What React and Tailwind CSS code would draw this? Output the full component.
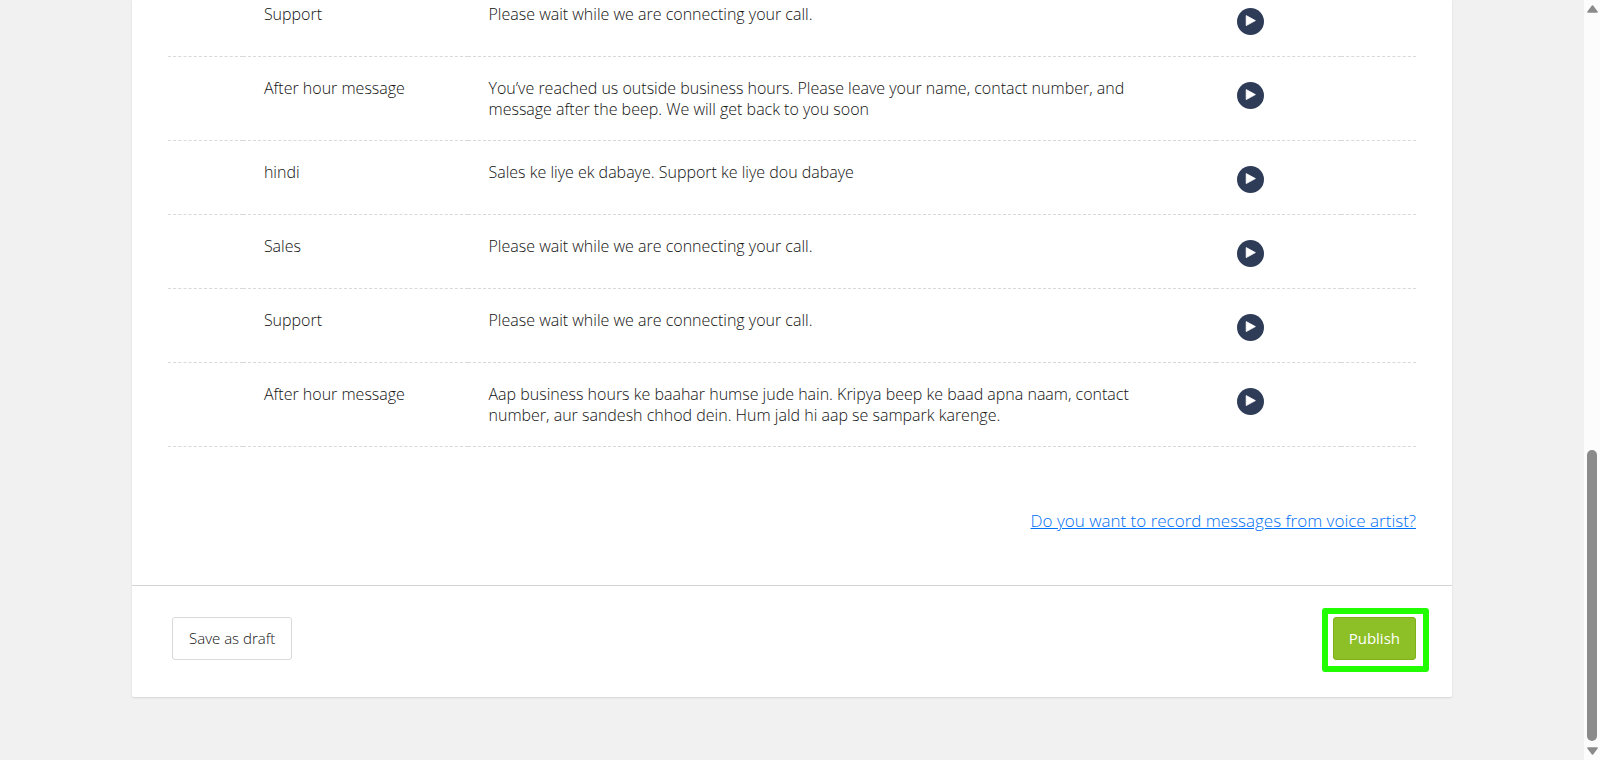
import { useState } from 'react'

// ── Data ────────────────────────────────────────────────────────────────────

const MESSAGES = [
  { id: 1, name: 'Support', text: 'Please wait while we are connecting your call.' },
  { id: 2, name: 'After hour message', text: 'You’ve reached us outside business hours. Please leave your name, contact number, and message after the beep. We will get back to you soon' },
  { id: 3, name: 'hindi', text: 'Sales ke liye ek dabaye. Support ke liye dou dabaye' },
  { id: 4, name: 'Sales', text: 'Please wait while we are connecting your call.' },
  { id: 5, name: 'Support', text: 'Please wait while we are connecting your call.' },
  { id: 6, name: 'After hour message', text: 'Aap business hours ke baahar humse jude hain. Kripya beep ke baad apna naam, contact number, aur sandesh chhod dein. Hum jald hi aap se sampark karenge.' },
]

// ── Main component ──────────────────────────────────────────────────────────

export default function App() {
  const [playing, setPlaying] = useState(null)

  return (
    <div className="flex h-screen overflow-hidden bg-[#f1f1f1] font-['Open_Sans',sans-serif] font-light text-[#111]">
      <main className="min-w-0 flex-1">
        <div className="mx-auto w-10/12 rounded-b-[2px] bg-white shadow-[0_1px_2px_rgba(0,0,0,0.12)]">
          <div className="px-9 pb-[52px]">
            <table className="w-full table-fixed border-separate border-spacing-0 text-base leading-[21px]">
              <colgroup>
                <col className="w-[6%]" />
                <col className="w-[18%]" />
                <col className="w-[60%]" />
                <col className="w-[10%]" />
                <col className="w-[6%]" />
              </colgroup>
              <tbody>
                {MESSAGES.map(message => (
                  <MessageRow
                    key={message.id}
                    message={message}
                    playing={playing === message.id}
                    onPlay={() => setPlaying(playing === message.id ? null : message.id)}
                  />
                ))}
              </tbody>
            </table>

            <div className="mt-[62px] text-right leading-6">
              <a href="#voice-artist" className="text-[17px] text-[#0070f5] underline">
                Do you want to record messages from voice artist?
              </a>
            </div>
          </div>

          {/* Footer actions */}
          <footer className="flex items-center justify-between border-t border-[#d4d4d4] pt-[31px] pr-9 pb-[37px] pl-10">
            <button
              type="button"
              className="h-[43px] rounded-[3px] border border-[#d9d9d9] bg-white px-4 text-[15px]"
            >
              Save as draft
            </button>
            <div className="relative">
              <button
                type="button"
                className="h-[43px] rounded-[3px] border border-[#7eb017] bg-[#8dbf27] px-[15px] text-[15px] font-normal text-white"
              >
                Publish
              </button>
              <span className="pointer-events-none absolute -top-[9px] -right-[13px] -bottom-3 -left-[11px] rounded-[3px] border-6 border-[#22ff00]" />
            </div>
          </footer>
        </div>
      </main>

      <ScrollBar />
    </div>
  )
}

// ── Message row ─────────────────────────────────────────────────────────────

function MessageRow({ message, playing, onPlay }) {
  return (
    <tr className="align-top *:border-b *:border-dashed *:border-[#d9d9d9] *:pt-[21px] *:pr-8 *:pb-5 *:pl-[21px] first:*:pt-1">
      <td />
      <td>{message.name}</td>
      <td>{message.text}</td>
      <td>
        <div className="flex h-8 items-end pb-px">
          <button
            type="button"
            onClick={onPlay}
            aria-pressed={playing}
            aria-label={`Play ${message.name}`}
            className="size-[27px] rounded-full bg-[#2e3c58]"
          >
            <svg viewBox="0 0 27 27" className="size-full" aria-hidden="true">
              <path d="M9.2 7.6 L18.4 12.6 L9.2 17.6 Z" fill="#fff" stroke="#fff" strokeWidth="0.8" strokeLinejoin="round" />
            </svg>
          </button>
        </div>
      </td>
      <td />
    </tr>
  )
}

// ── Scroll bar ──────────────────────────────────────────────────────────────

function ScrollBar() {
  return (
    <div className="flex h-full w-4 flex-col items-center bg-[#fcfcfc] py-[5px]" aria-hidden="true">
      <svg viewBox="0 0 11 8" className="h-2 w-[11px]">
        <path d="M5.5 1 L10 7 H1 Z" fill="#8b8b8b" stroke="#8b8b8b" strokeWidth="1.6" strokeLinejoin="round" />
      </svg>
      <div className="flex w-[10px] flex-1 flex-col justify-end pb-[6px]">
        <div className="h-2/5 rounded-full bg-[#8b8b8b]" />
      </div>
      <svg viewBox="0 0 11 8" className="h-2 w-[11px]">
        <path d="M5.5 7 L10 1 H1 Z" fill="#8b8b8b" stroke="#8b8b8b" strokeWidth="1.6" strokeLinejoin="round" />
      </svg>
    </div>
  )
}
